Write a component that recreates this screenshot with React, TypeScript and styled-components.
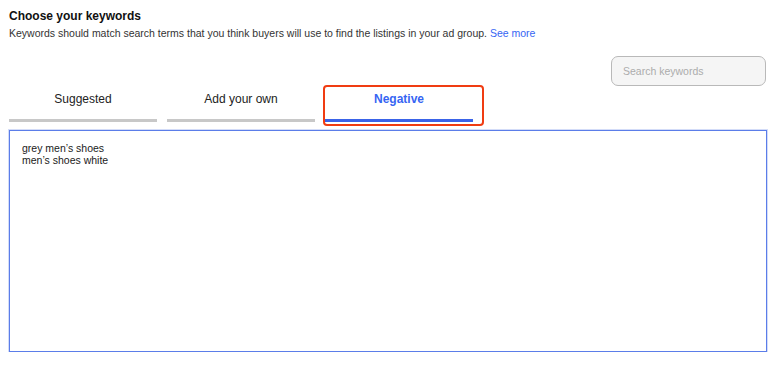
import React from "react";
import styled, { createGlobalStyle } from "styled-components";

const GlobalStyle = createGlobalStyle`
  html, body { margin: 0; padding: 0; background: #ffffff; }
  body { font-family: "Liberation Sans", Arial, Helvetica, sans-serif; color: #111; }
  * { box-sizing: border-box; }
`;

const Page = styled.div`
  width: 758px;
  margin-left: 9px;
  padding-top: 9px;
  display: flex;
  flex-direction: column;
`;

const Title = styled.h2`
  margin: 0;
  font-size: 12px;
  line-height: 15px;
  font-weight: 700;
  color: #111;
`;

const Subtitle = styled.p`
  margin: 2px 0 0;
  font-size: 10.5px;
  line-height: 14px;
  color: #333;
`;

const Link = styled.a`
  color: #3665f3;
  text-decoration: none;
`;

const Toolbar = styled.div`
  display: flex;
  justify-content: flex-end;
  margin-top: 16px;
  padding-right: 1px;
`;

const SearchInput = styled.input`
  width: 155px;
  height: 30px;
  border: 1px solid #b9b9b9;
  border-radius: 7px;
  background: #f5f5f5;
  padding: 0 11px;
  font-family: "Liberation Sans", Arial, sans-serif;
  font-size: 10.5px;
  color: #333;
  outline: none;
  &::placeholder { color: #acacac; }
`;

const Tabs = styled.div`
  display: flex;
  gap: 10px;
`;

const Tab = styled.div<{ $active?: boolean }>`
  position: relative;
  width: 148px;
  height: 36px;
  padding-top: 6px;
  text-align: center;
  font-size: 12px;
  line-height: 15px;
  font-weight: ${(p) => (p.$active ? 700 : 400)};
  color: ${(p) => (p.$active ? "#3665f3" : "#222")};
  border-bottom: 3px solid ${(p) => (p.$active ? "#3a63e8" : "#c8c8c8")};
`;

const Highlight = styled.span`
  position: absolute;
  left: -2px;
  top: -1px;
  width: 161px;
  height: 41px;
  border: 2px solid #f03c12;
  border-radius: 4px;
  pointer-events: none;
`;

const KeywordBox = styled.div`
  margin-top: 8px;
  height: 222px;
  border: 1px solid #5b7de9;
  box-shadow: 0 0 0 1px #d3dcf8;
  padding: 12px 12px;
  font-size: 10.5px;
  line-height: 11.5px;
  color: #1a1a1a;
`;

const KeywordLine = styled.div``;

export default function App() {
  return (
    <>
      <GlobalStyle />
      <Page>
        <Title>Choose your keywords</Title>
        <Subtitle>
          Keywords should match search terms that you think buyers will use to find the listings in your ad group.{" "}
          <Link href="#">See more</Link>
        </Subtitle>
        <Toolbar>
          <SearchInput placeholder="Search keywords" />
        </Toolbar>
        <Tabs>
          <Tab>Suggested</Tab>
          <Tab>Add your own</Tab>
          <Tab $active>
            Negative
            <Highlight />
          </Tab>
        </Tabs>
        <KeywordBox>
          <KeywordLine>grey men’s shoes</KeywordLine>
          <KeywordLine>men’s shoes white</KeywordLine>
        </KeywordBox>
      </Page>
    </>
  );
}
